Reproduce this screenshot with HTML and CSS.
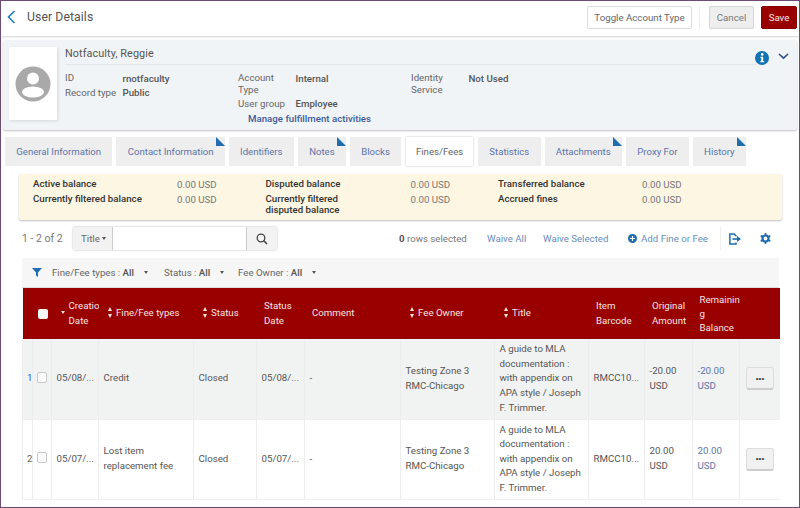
FILE: index.html
```html
<!DOCTYPE html>
<html lang="en">
<head>
  <meta charset="UTF-8">
  <title>User Details</title>
  <link rel="stylesheet" href="styles.css">
</head>
<body>
  <div class="frame">
    <!-- Page header -->
    <header class="topbar">
      <svg class="back" width="9" height="14" viewBox="0 0 9 14"><path d="M7.5 1 L1.5 7 L7.5 13" fill="none" stroke="#1c7ac0" stroke-width="1.6"/></svg>
      <h1>User Details</h1>
      <button class="btn toggle">Toggle Account Type</button>
      <span class="sep"></span>
      <button class="btn cancel">Cancel</button>
      <button class="btn save">Save</button>
    </header>

    <!-- User summary -->
    <section class="user-panel">
      <div class="photo">
        <svg width="36" height="36" viewBox="0 0 36 36">
          <circle cx="18" cy="18" r="17.5" fill="#a9a9a9"/>
          <circle cx="18" cy="12.5" r="6" fill="#fff"/>
          <ellipse cx="18" cy="26" rx="11" ry="5.6" fill="#fff"/>
        </svg>
      </div>
      <div class="user-main">
        <div class="user-name">Notfaculty, Reggie</div>
        <div class="user-info">
          <div class="info-col">
            <span class="lbl">ID</span><b>rnotfaculty</b>
            <span class="lbl">Record type</span><b>Public</b>
          </div>
          <div class="info-col">
            <span class="lbl">Account Type</span><b>Internal</b>
            <span class="lbl">User group</span><b>Employee</b>
          </div>
          <div class="info-col">
            <span class="lbl">Identity Service</span><b>Not Used</b>
          </div>
        </div>
        <a class="manage" href="#">Manage fulfillment activities</a>
      </div>
      <div class="panel-icons">
        <svg width="14" height="14" viewBox="0 0 14 14">
          <circle cx="7" cy="7" r="7" fill="#1273b5"/>
          <circle cx="7.2" cy="3.4" r="1.3" fill="#fff"/>
          <path d="M5.4 5.8 H8.2 V10.2 H9.2 V11.3 H5.2 V10.2 H6.2 V6.9 H5.4 Z" fill="#fff"/>
        </svg>
        <svg width="11" height="7" viewBox="0 0 11 7"><path d="M1 1 L5.5 5.2 L10 1" fill="none" stroke="#2d4f8e" stroke-width="1.6"/></svg>
      </div>
    </section>

    <!-- Tabs -->
    <nav class="tabs">
      <a class="tab">General Information</a>
      <a class="tab marked">Contact Information</a>
      <a class="tab">Identifiers</a>
      <a class="tab marked">Notes</a>
      <a class="tab">Blocks</a>
      <a class="tab active">Fines/Fees</a>
      <a class="tab">Statistics</a>
      <a class="tab marked">Attachments</a>
      <a class="tab">Proxy For</a>
      <a class="tab marked">History</a>
    </nav>

    <!-- Balances -->
    <section class="balances">
      <b>Active balance</b><span>0.00 USD</span>
      <b>Disputed balance</b><span>0.00 USD</span>
      <b>Transferred balance</b><span>0.00 USD</span>
      <b>Currently filtered balance</b><span>0.00 USD</span>
      <b>Currently filtered<br>disputed balance</b><span>0.00 USD</span>
      <b>Accrued fines</b><span>0.00 USD</span>
    </section>

    <!-- Toolbar -->
    <div class="toolbar">
      <span class="count">1 - 2 of 2</span>
      <div class="search">
        <span class="search-scope">Title <i class="caret"></i></span>
        <span class="search-input"></span>
        <span class="search-btn">
          <svg width="12" height="12" viewBox="0 0 12 12"><circle cx="5" cy="5" r="3.8" fill="none" stroke="#444" stroke-width="1.3"/><path d="M7.8 7.8 L11 11" stroke="#444" stroke-width="1.6"/></svg>
        </span>
      </div>
      <span class="selected"><b>0</b> rows selected</span>
      <a class="action waive-all">Waive All</a>
      <a class="action waive-sel">Waive Selected</a>
      <a class="action add">
        <svg width="11" height="11" viewBox="0 0 11 11"><circle cx="5.5" cy="5.5" r="5.5" fill="#1f6cb0"/><path d="M5.5 2.5 V8.5 M2.5 5.5 H8.5" stroke="#fff" stroke-width="1.4"/></svg>
        Add Fine or Fee
      </a>
      <span class="tool-sep"></span>
      <svg class="export" width="12" height="12" viewBox="0 0 12 12"><path d="M7 3.4 V2.8 L5 .9 H.9 V11.1 H7 V9.4" fill="none" stroke="#1f6cb0" stroke-width="1.5"/><path d="M3.5 6 H8.5" stroke="#1f6cb0" stroke-width="1.6"/><path d="M8 3 L12 6 L8 9 Z" fill="#1f6cb0"/></svg>
      <svg class="gear" width="11" height="11" viewBox="0 0 11 11"><circle cx="5.5" cy="5.5" r="3" fill="none" stroke="#1f6cb0" stroke-width="2.2"/><path d="M5.5 0 V2 M5.5 9 V11 M.7 2.7 L2.4 3.7 M8.6 7.3 L10.3 8.3 M.7 8.3 L2.4 7.3 M8.6 3.7 L10.3 2.7" stroke="#1f6cb0" stroke-width="1.7"/></svg>
    </div>

    <!-- Filters -->
    <div class="filters">
      <svg width="10" height="9" viewBox="0 0 10 9"><path d="M0 0 H10 L6 4.4 V9 L4 7.6 V4.4 Z" fill="#1f6cb0"/></svg>
      <span class="filter f-type">Fine/Fee types : <b>All</b><i class="caret"></i></span>
      <span class="filter f-status">Status : <b>All</b><i class="caret"></i></span>
      <span class="filter f-owner">Fee Owner : <b>All</b><i class="caret"></i></span>
    </div>

    <!-- Fines table -->
    <table class="fees">
      <colgroup>
        <col class="c-num"><col class="c-check"><col class="c-date"><col class="c-type"><col class="c-status">
        <col class="c-sdate"><col class="c-comment"><col class="c-owner"><col class="c-title"><col class="c-barcode">
        <col class="c-orig"><col class="c-rem"><col class="c-act">
      </colgroup>
      <thead>
        <tr>
          <th colspan="2" class="th-check"><span class="box head-box"></span></th>
          <th class="th-date"><i class="sort-down"></i><span>Creatio<br>Date</span></th>
          <th class="sortable"><i class="sort"></i>Fine/Fee types</th>
          <th class="sortable"><i class="sort"></i>Status</th>
          <th>Status Date</th>
          <th>Comment</th>
          <th class="sortable"><i class="sort"></i>Fee Owner</th>
          <th class="sortable"><i class="sort"></i>Title</th>
          <th>Item Barcode</th>
          <th>Original Amount</th>
          <th class="th-rem">Remainin<br>g<br>Balance</th>
          <th></th>
        </tr>
      </thead>
      <tbody>
        <tr class="odd">
          <td class="num">1</td>
          <td class="check"><span class="box"></span></td>
          <td>05/08/...</td>
          <td>Credit</td>
          <td>Closed</td>
          <td>05/08/...</td>
          <td>-</td>
          <td>Testing Zone 3 RMC-Chicago</td>
          <td>A guide to MLA documentation : with appendix on APA style / Joseph F. Trimmer.</td>
          <td>RMCC10...</td>
          <td>-20.00 USD</td>
          <td class="link">-20.00 USD</td>
          <td class="act"><button class="more">&#8226;&#8226;&#8226;</button></td>
        </tr>
        <tr>
          <td class="num">2</td>
          <td class="check"><span class="box"></span></td>
          <td>05/07/...</td>
          <td>Lost item replacement fee</td>
          <td>Closed</td>
          <td>05/07/...</td>
          <td>-</td>
          <td>Testing Zone 3 RMC-Chicago</td>
          <td>A guide to MLA documentation : with appendix on APA style / Joseph F. Trimmer.</td>
          <td>RMCC10...</td>
          <td>20.00 USD</td>
          <td class="link">20.00 USD</td>
          <td class="act"><button class="more">&#8226;&#8226;&#8226;</button></td>
        </tr>
      </tbody>
    </table>
  </div>
</body>
</html>
```

FILE: styles.css
```css
* {
  box-sizing: border-box;
}
html, body {
  margin: 0;
  height: 508px;
  overflow: hidden;
}
body {
  font-family: Roboto, "Liberation Sans", sans-serif;
  font-size: 9.7px;
  color: #555;
  background: #fff;
}
.frame {
  width: 800px;
  height: 508px;
  border: 1px solid #6d4a78;
  overflow: hidden;
}

/* Header */
.topbar {
  display: flex;
  align-items: center;
  height: 35px;
  padding: 0 2px 3px 6px;
  box-shadow: 0 1px 2px rgba(0, 0, 0, 0.18);
}
.topbar h1 {
  margin: 0 auto 0 11px;
  font-size: 12.2px;
  font-weight: 400;
  letter-spacing: 0.1px;
  color: #555;
}
.btn {
  height: 23px;
  padding: 0;
  font-family: inherit;
  font-size: 9.7px;
  border-radius: 2px;
  cursor: pointer;
}
.toggle {
  width: 105px;
  background: #fff;
  border: 1px solid #ddd;
  color: #666;
}
.sep {
  width: 1px;
  height: 23px;
  margin: 0 9px 0 7px;
  background: #eee;
}
.cancel {
  width: 45px;
  margin-right: 7px;
  background: #eee;
  border: 1px solid #d5d5d5;
  color: #777;
}
.save {
  width: 36px;
  background: #990000;
  border: 1px solid #880000;
  color: #fbeaea;
}

/* User panel */
.user-panel {
  display: flex;
  height: 90px;
  margin: 4px 2px 0;
  padding: 7px 6px 0;
  background: #f1f4f6;
  border-radius: 3px;
  box-shadow: 0 1px 2px rgba(0, 0, 0, 0.25);
}
.photo {
  display: flex;
  flex: none;
  align-items: center;
  justify-content: center;
  width: 48px;
  height: 73px;
  background: #fff;
  box-shadow: 1px 1px 3px rgba(0, 0, 0, 0.12);
}
.user-main {
  flex: 1;
  margin-left: 8px;
}
.user-name {
  height: 18px;
  font-size: 10.8px;
  line-height: 13px;
  letter-spacing: 0.1px;
  border-bottom: 1px solid #e2e6e9;
  color: #555;
}
.user-info {
  display: flex;
  height: 42px;
  margin-top: 7px;
}
.info-col {
  display: grid;
  grid-template-columns: 57.5px 115.5px;
  align-content: start;
  row-gap: 2.5px;
  line-height: 11.5px;
}
.info-col b {
  font-weight: 500;
  padding-top: 0.5px;
  color: #555;
}
.lbl {
  color: #666;
}
.manage {
  display: block;
  margin: -1px 0 0 183px;
  font-weight: 500;
  line-height: 12px;
  color: #3d5a9c;
  text-decoration: none;
}
.panel-icons {
  display: flex;
  flex: none;
  gap: 9px;
  align-items: flex-start;
  width: 36px;
  margin: 4px 0 0 -2px;
}
.panel-icons svg:last-child {
  margin-top: 2px;
}

/* Tabs */
.tabs {
  display: flex;
  gap: 4px;
  height: 29px;
  margin: 7px 0 0 4px;
}
.tab {
  position: relative;
  display: block;
  padding: 0 11.3px;
  font-size: 9.6px;
  line-height: 29px;
  color: #5b74a8;
  background: #eee;
  white-space: nowrap;
}
.tab.active {
  padding: 0 9.8px;
  margin: 0 1px;
  color: #666;
  background: #fff;
  box-shadow: 0 0 2px rgba(0, 0, 0, 0.25);
}
.marked::after {
  content: "";
  position: absolute;
  top: 0;
  right: 0;
  border-bottom: 9px solid #1f6cb0;
  border-right: 9px solid transparent;
}

/* Balances */
.balances {
  display: grid;
  grid-template-columns: 144px 88.5px 145px 87.5px 144px 1fr;
  align-content: start;
  row-gap: 3px;
  height: 46px;
  margin: 8px 17px 0 18px;
  padding: 4px 0 0 14px;
  background: #fdf6e3;
  border-radius: 2px;
  box-shadow: 0 1px 2px rgba(0, 0, 0, 0.25);
  line-height: 11px;
}
.balances b {
  font-weight: 500;
  color: #333;
}
.balances span {
  padding-top: 1px;
  color: #777;
}

/* Toolbar */
.toolbar {
  display: flex;
  align-items: center;
  height: 23px;
  margin: 7px 0 0 21px;
}
.count {
  width: 51px;
  color: #777;
  font-size: 10.5px;
}
.search {
  display: flex;
  width: 204px;
  height: 23px;
  border-radius: 3px;
  box-shadow: 0 0 2px rgba(0, 0, 0, 0.35);
  overflow: hidden;
}
.search-scope {
  display: flex;
  align-items: center;
  gap: 2px;
  width: 40px;
  padding-left: 8px;
  background: #f2f2f2;
  border-right: 1px solid #ccc;
  color: #666;
}
.search-input {
  flex: 1;
  background: #fff;
}
.search-btn {
  display: flex;
  align-items: center;
  justify-content: center;
  width: 31px;
  background: #f2f2f2;
  border-left: 1px solid #ccc;
}
.caret {
  display: inline-block;
  border-top: 3px solid #555;
  border-left: 2.5px solid transparent;
  border-right: 2.5px solid transparent;
}
.selected {
  width: 67px;
  margin-left: 122px;
  color: #777;
  white-space: nowrap;
}
.selected b {
  font-weight: 700;
  color: #555;
}
.action {
  display: flex;
  align-items: center;
  gap: 4px;
  color: #6a8cbd;
  white-space: nowrap;
}
.waive-all {
  width: 38px;
  margin-left: 21px;
}
.waive-sel {
  width: 65px;
  margin-left: 18px;
}
.add {
  width: 80px;
  margin-left: 20px;
}
.tool-sep {
  width: 1px;
  height: 23px;
  margin-left: 12px;
  background: #eee;
}
.export {
  margin-left: 8px;
}
.gear {
  margin-left: 19px;
}

/* Filters */
.filters {
  display: flex;
  align-items: center;
  width: 757px;
  height: 30px;
  margin: 8px 0 0 21px;
  padding-left: 10px;
  background: #f6f6f6;
  border-bottom: 1px solid #ddd;
  color: #666;
}
.filter b {
  font-weight: 500;
  color: #555;
}
.filter .caret {
  margin-left: 10px;
  vertical-align: 2px;
}
.f-type {
  margin-left: 10px;
  width: 112px;
}
.f-status {
  width: 74px;
}

/* Table */
.fees {
  width: 757px;
  margin-left: 21px;
  table-layout: fixed;
  border-collapse: collapse;
  line-height: 14.6px;
}
.c-num { width: 10px; }
.c-check { width: 19px; }
.c-date { width: 47px; }
.c-type { width: 95px; }
.c-status { width: 63px; }
.c-sdate { width: 48px; }
.c-comment { width: 96px; }
.c-owner { width: 94px; }
.c-title { width: 94px; }
.c-barcode { width: 56px; }
.c-orig { width: 48px; }
.c-rem { width: 47px; }
.c-act { width: 40px; }
.fees th {
  height: 51px;
  padding: 0 0 0 7.5px;
  font-weight: 400;
  text-align: left;
  color: #f7e4e4;
  background: #990000;
  overflow: hidden;
}
.fees .sortable {
  padding-left: 9.5px;
}
.fees .th-check {
  padding-left: 15px;
}
.fees .th-date {
  padding: 0;
}
.th-date span {
  display: block;
  margin-left: 17px;
}
.fees .th-rem {
  padding-left: 7px;
  line-height: 14px;
}
.sort {
  display: inline-block;
  position: relative;
  width: 8px;
  height: 11px;
  vertical-align: -2px;
}
.sort::before,
.sort::after {
  content: "";
  position: absolute;
  left: 0;
  border-left: 2.5px solid transparent;
  border-right: 2.5px solid transparent;
}
.sort::before {
  top: 0;
  border-bottom: 4.5px solid #f7e4e4;
}
.sort::after {
  bottom: 0;
  border-top: 4.5px solid #f7e4e4;
}
.sort-down {
  float: left;
  margin: 12px 0 0 9px;
  border-top: 3px solid #f7e4e4;
  border-left: 2.5px solid transparent;
  border-right: 2.5px solid transparent;
}
.fees td {
  height: 80px;
  padding: 0 3px 0 4.5px;
  border-right: 1px solid #ececec;
  border-bottom: 1px solid #efefef;
  color: #555;
}
.fees td:first-child {
  border-left: 1px solid #ececec;
}
.fees td:last-child {
  border-right: none;
}
.odd td {
  background: #f1f3f3;
}
.fees .num {
  padding: 0 0 0 4px;
  color: #2f5f9e;
}
.fees tr:not(.odd) .num {
  color: #666;
}
.fees .check {
  padding: 0 0 3px 4px;
}
.box {
  display: block;
  width: 10px;
  height: 11px;
  background: #fafafa;
  border: 1px solid #c8c8c8;
  border-radius: 2px;
}
.head-box {
  width: 10px;
  height: 10px;
  background: #f7f7f7;
  border: none;
}
.fees .link {
  color: #5b74a8;
}
.fees .act {
  padding: 0 0 0 6px;
}
.more {
  display: block;
  width: 28px;
  height: 23px;
  padding: 0;
  font-size: 8px;
  color: #444;
  background: #f1f1f1;
  border: 1px solid #ddd;
  border-bottom: 2px solid #ccc;
  border-radius: 3px;
}
```
